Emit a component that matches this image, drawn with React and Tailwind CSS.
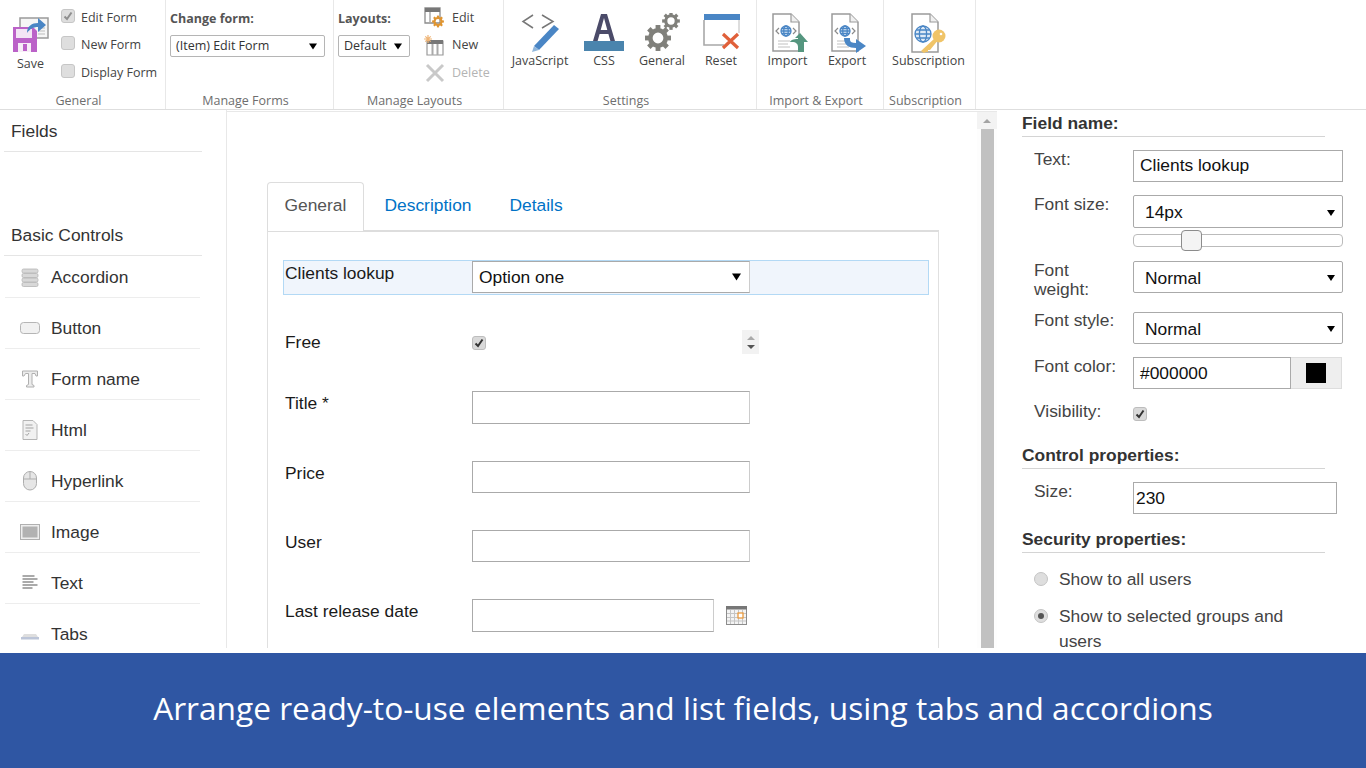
import React from "react";

const Arrow = ({ c = "#000", w = 9, h = 7 }) => (
  <svg width={w} height={h} viewBox="0 0 9 7" className="shrink-0"><path d="M0 0h9L4.5 7z" fill={c} /></svg>
);

const Check = ({ checked, faded }) => (
  <div className={`w-[14px] h-[14px] rounded-[3px] border flex items-center justify-center shrink-0 ${faded ? "bg-[#dedede] border-[#c6c6c6]" : "bg-[#d9d9d9] border-[#bdbdbd]"}`}>
    {checked && (
      <svg width="10" height="10" viewBox="0 0 10 10"><path d="M1.5 5.5 4 8l4.5-6.5" fill="none" stroke={faded ? "#8f8f8f" : "#333"} strokeWidth="2" /></svg>
    )}
  </div>
);

const Gear = ({ cx, cy, r, c = "#80807b" }) => {
  const teeth = [0, 45, 90, 135, 180, 225, 270, 315];
  return (
    <g>
      {teeth.map((a) => (
        <rect key={a} x={cx - r * 0.22} y={cy - r * 1.18} width={r * 0.44} height={r * 0.5} fill={c} transform={`rotate(${a} ${cx} ${cy})`} />
      ))}
      <circle cx={cx} cy={cy} r={r * 0.7} fill="none" stroke={c} strokeWidth={r * 0.42} />
    </g>
  );
};

const SaveIcon = () => (
  <svg width="40" height="40" viewBox="0 0 40 40" className="ml-[11px]">
    <path d="M9 4h28v20H9z" fill="#f6f6f6" stroke="#9b9b9b" strokeWidth="1.500" />
    <path d="M27 14h7M27 17h7M27 20h7" stroke="#bbb" />
    <path d="M2 13h20l4 4v21H2z" fill="#bb62c8" />
    <path d="M5 15h16v9H5z" fill="#f3e4f5" />
    <path d="M7 29h13v9H7z" fill="#f6eef7" />
    <path d="M12 30h4v7h-4z" fill="#bb62c8" />
    <path d="M16 19c0-7 5-10 11-10V4l8 7-8 7v-5c-5 0-8 2-11 6z" fill="#4a86c5" />
  </svg>
);

const JsIcon = () => (
  <svg width="40" height="40" viewBox="0 0 40 40">
    <path d="M13 2 3 8.500l10 6.500M22 2l11 6.500-11 6.500" fill="none" stroke="#777" strokeWidth="1.500" />
    <path d="M34 12l5 4-20 21-5-4z" fill="#4a86c5" />
    <path d="M14 33l5 4-7 2z" fill="#8fb6dc" />
  </svg>
);

const CssIcon = () => (
  <svg width="40" height="40" viewBox="0 0 40 40">
    <path d="M9 28 17 1h6l8 27h-4.600l-2-7h-8.800l-2 7zM16.700 17h6.600L20 5z" fill="#4b4b69" fillRule="evenodd" />
    <rect x="0" y="28" width="40" height="10" fill="#4a84ad" />
  </svg>
);

const GearsIcon = () => (
  <svg width="40" height="40" viewBox="0 0 40 40">
    <Gear cx={16} cy={25} r={11} />
    <Gear cx={29} cy={8} r={7.500} />
  </svg>
);

const ResetIcon = () => (
  <svg width="42" height="40" viewBox="0 0 42 40" className="ml-[2px]">
    <path d="M3 7v25h20" fill="none" stroke="#a8a8a8" strokeWidth="1.600" />
    <path d="M38 7v13" fill="none" stroke="#cfcfcf" strokeWidth="1.400" />
    <rect x="3" y="1" width="36" height="6" fill="#4a86c5" />
    <path d="M22 21l15 14M37 21 22 35" stroke="#e0603a" strokeWidth="3.200" />
  </svg>
);

const DocBase = () => (
  <g>
    <path d="M6 1h18l8 8v29H6z" fill="#fff" stroke="#9a9a9a" strokeWidth="1.500" />
    <path d="M24 1v8h8" fill="#f0f0f0" stroke="#9a9a9a" strokeWidth="1.200" />
    <path d="M11 28h12M11 31h10M11 34h12" stroke="#c0c0c0" />
  </g>
);

const Globe = ({ cx, cy, r }) => (
  <g fill="none" stroke="#4a86c5" strokeWidth="1.300">
    <circle cx={cx} cy={cy} r={r} fill="#dfeaf6" />
    <ellipse cx={cx} cy={cy} rx={r * 0.45} ry={r} />
    <path d={`M${cx - r} ${cy}h${2 * r}M${cx - r * 0.85} ${cy - r * 0.5}h${1.7 * r}M${cx - r * 0.85} ${cy + r * 0.5}h${1.7 * r}`} />
  </g>
);

const ImportIcon = () => (
  <svg width="42" height="40" viewBox="0 0 42 40">
    <DocBase />
    <Globe cx={19} cy={18} r={5} />
    <path d="M12 15l-3 3 3 3M26 15l3 3-3 3" fill="none" stroke="#8a8a8a" strokeWidth="1.200" />
    <path d="M33 20l8 9h-4v10h-6v-5c0-3-2-5-6-5h-2c1-2 3-3 8-3v-1h-3z" fill="#55967f" />
  </svg>
);

const ExportIcon = () => (
  <svg width="42" height="40" viewBox="0 0 42 40">
    <DocBase />
    <Globe cx={19} cy={18} r={5} />
    <path d="M12 15l-3 3 3 3M26 15l3 3-3 3" fill="none" stroke="#8a8a8a" strokeWidth="1.200" />
    <path d="M18 25h6v2c0 2 2 3 6 3v-4l10 7-10 7v-5c-7 0-12-3-12-10z" fill="#4a86c5" />
  </svg>
);

const SubIcon = () => (
  <svg width="40" height="40" viewBox="0 0 40 40">
    <path d="M3 1h18l8 8v30H3z" fill="#fff" stroke="#9a9a9a" strokeWidth="1.500" />
    <path d="M21 1v8h8" fill="#f0f0f0" stroke="#9a9a9a" strokeWidth="1.200" />
    <Globe cx={14} cy={21} r={8} />
    <circle cx={30} cy={23} r={6.500} fill="#f0c468" />
    <path d="M26 25 12 38l3 2 2-1 2 0 0-2 2 0 9-11z" fill="#f0c468" />
    <circle cx={32} cy={21} r={1.300} fill="#fff" />
  </svg>
);

const LayoutEdit = () => (
  <svg width="22" height="22" viewBox="0 0 22 22">
    <path d="M1 1h15v15H1z" fill="#fff" stroke="#8c8c8c" strokeWidth="1.300" />
    <path d="M1 1h15v4H1z" fill="#777" />
    <path d="M6 5v11" stroke="#aaa" strokeWidth="1.500" />
    <Gear cx={14} cy={14.500} r={5} c="#df9430" />
  </svg>
);

const LayoutNew = () => (
  <svg width="22" height="22" viewBox="0 0 22 22">
    <path d="M3 6h16v14H3z" fill="#fff" stroke="#9a9a9a" strokeWidth="1.200" />
    <path d="M3 5h16v4H3z" fill="#777" />
    <path d="M8.500 9v11M13.500 9v11" stroke="#aaa" strokeWidth="2" />
    <path d="M4 0v8M0 4h8M1.300 1.300l5.400 5.400M6.700 1.300 1.300 6.700" stroke="#efb577" strokeWidth="1.200" />
  </svg>
);

const LayoutDel = () => (
  <svg width="22" height="22" viewBox="0 0 22 22"><path d="M3 3l16 16M19 3 3 19" stroke="#c9c9c9" strokeWidth="3" /></svg>
);

const side = {
  Accordion: (
    <svg width="20" height="20" viewBox="0 0 20 20">
      {[2, 6.500, 11, 15.500].map((y) => <rect key={y} x="2" y={y} width="16" height="4" rx="1.500" fill="#d8d8d8" stroke="#b5b5b5" strokeWidth=".8" />)}
    </svg>
  ),
  Button: (
    <svg width="20" height="20" viewBox="0 0 20 20"><rect x=".5" y="4.500" width="19" height="11" rx="3" fill="#f1f1f1" stroke="#b5b5b5" /></svg>
  ),
  "Form name": (
    <svg width="20" height="20" viewBox="0 0 20 20"><path d="M2.500 2h15v5h-1.500l-1-2.500h-3v11l2 1V18h-7.500v-1.500l2-1v-11h-3L4 7H2.500z" fill="#ececec" stroke="#b0b0b0" /></svg>
  ),
  Html: (
    <svg width="20" height="20" viewBox="0 0 20 20">
      <path d="M3 .5h10l4 4v15H3z" fill="#f1f1f1" stroke="#b5b5b5" />
      <path d="M5.500 5h7M5.500 8h8M5.500 11h5" stroke="#a3a3a3" />
      <path d="M5.500 14l1.500 1.500 2-2.500" fill="none" stroke="#a3a3a3" />
    </svg>
  ),
  Hyperlink: (
    <svg width="20" height="20" viewBox="0 0 20 20">
      <rect x="3.500" y=".5" width="13" height="18.500" rx="6.500" fill="#e6e6e6" stroke="#adadad" />
      <path d="M3.500 8h13M10 .5V8" stroke="#adadad" />
    </svg>
  ),
  Image: (
    <svg width="20" height="20" viewBox="0 0 20 20"><rect x=".5" y="2.500" width="19" height="15" fill="#eee" stroke="#b0b0b0" /><rect x="2.500" y="4.500" width="15" height="11" fill="#b2b2b2" /></svg>
  ),
  Text: (
    <svg width="20" height="20" viewBox="0 0 20 20"><path d="M2.500 3h12M2.500 6h15M2.500 9h11M2.500 12h15M2.500 15h10" stroke="#8f8f8f" strokeWidth="1.300" /></svg>
  ),
  Tabs: (
    <svg width="20" height="20" viewBox="0 0 20 20"><path d="M4 10h12l2 3H2z" fill="#dedede" /><rect x="1" y="13" width="18" height="2.500" fill="#bcc5d8" /></svg>
  ),
};

const RibbonBtn = ({ w, icon, label }) => (
  <div className={`flex flex-col items-center ${w}`}>
    <div className="h-[40px] mt-[13px]">{icon}</div>
    <span className="leading-[16px]">{label}</span>
  </div>
);

const Group = ({ w, label, children }) => (
  <div className={`${w} h-[109px] flex flex-col border-r border-[#e8e8e8] shrink-0`}>
    <div className="h-[93px] flex">{children}</div>
    <div className="mt-[1px] text-center text-[#6e6e6e] leading-[16px] whitespace-nowrap pr-[8px]">{label}</div>
  </div>
);

const RSel = ({ w, text }) => (
  <div className={`${w} h-[22px] border border-[#b5b5b5] rounded-[2px] flex items-center justify-between pl-[5px] pr-[7px] text-[#333] bg-white`}>
    <span>{text}</span>
    <Arrow w={8} h={7} />
  </div>
);

const Ribbon = () => (
  <div className="flex h-[110px] border-b border-[#dedede] text-[12.500px] text-[#444] font-['Open_Sans',sans-serif]">
    <Group w="w-[166px]" label="General">
      <div className="w-[61px] flex flex-col">
        <div className="mt-[14px]"><SaveIcon /></div>
        <span className="text-center mt-[2px] leading-[16px]">Save</span>
      </div>
      <div className="flex flex-col pt-[9px]">
        {[["Edit Form", true, "mb-[9px]"], ["New Form", false, "mb-[10px]"], ["Display Form", false, ""]].map(([t, c, m]) => (
          <div key={t} className={`flex items-center gap-[6px] h-[18px] whitespace-nowrap ${m}`}>
            <div className="mb-[4px]"><Check checked={c} faded /></div>
            <span>{t}</span>
          </div>
        ))}
      </div>
    </Group>
    <Group w="w-[168px]" label="Manage Forms">
      <div className="pl-[4px] pt-[10px]">
        <div className="font-bold text-[#555] leading-[18px] mb-[7px]">Change form:</div>
        <RSel w="w-[155px]" text="(Item) Edit Form" />
      </div>
    </Group>
    <Group w="w-[170px]" label="Manage Layouts">
      <div className="pl-[4px] pt-[10px] w-[90px]">
        <div className="font-bold text-[#555] leading-[18px] mb-[7px]">Layouts:</div>
        <RSel w="w-[72px]" text="Default" />
      </div>
      <div className="flex flex-col pt-[7px]">
        {[[<LayoutEdit key="e" />, "Edit", ""], [<LayoutNew key="n" />, "New", ""], [<LayoutDel key="d" />, "Delete", "text-[#b4b4b4]"]].map(([ic, t, cl]) => (
          <div key={t} className={`flex items-center gap-[6px] h-[22px] mb-[5.500px] ${cl}`}>
            {ic}
            <span>{t}</span>
          </div>
        ))}
      </div>
    </Group>
    <Group w="w-[253px]" label="Settings">
      <div className="w-px" />
      <RibbonBtn w="w-[70px]" icon={<JsIcon />} label="JavaScript" />
      <RibbonBtn w="w-[58px]" icon={<CssIcon />} label="CSS" />
      <RibbonBtn w="w-[58px]" icon={<GearsIcon />} label="General" />
      <RibbonBtn w="w-[60px]" icon={<ResetIcon />} label="Reset" />
    </Group>
    <Group w="w-[127px]" label="Import & Export">
      <RibbonBtn w="w-[61px]" icon={<ImportIcon />} label="Import" />
      <RibbonBtn w="w-[58px]" icon={<ExportIcon />} label="Export" />
    </Group>
    <Group w="w-[92px]" label="Subscription">
      <RibbonBtn w="w-[89px]" icon={<SubIcon />} label="Subscription" />
    </Group>
  </div>
);

const Sidebar = () => {
  const items = ["Accordion", "Button", "Form name", "Html", "Hyperlink", "Image", "Text", "Tabs"];
  return (
    <div className="w-[227px] h-[538px] overflow-hidden shrink-0 border-r border-[#e8e8e8] text-[#333] leading-6">
      <div className="ml-[4px] w-[198px] mt-[9px] pl-[7px] pb-[8px] border-b border-[#e5e5e5]">Fields</div>
      <div className="ml-[4px] w-[198px] mt-[71px] pl-[7px] pb-[8px] border-b border-[#e5e5e5]">Basic Controls</div>
      <ul className="ml-[5px] w-[195px]">
        {items.map((t, i) => (
          <li key={t} className={`flex items-start gap-[11px] pl-[15px] border-b border-[#ededed] ${i === 0 ? "h-[42px] pt-[9px]" : "h-[51px] pt-[18px]"}`}>
            <span className="w-[20px] h-[24px] flex items-center justify-center">{side[t]}</span>
            <span>{t}</span>
          </li>
        ))}
      </ul>
    </div>
  );
};

const Input = ({ w = "w-[278px]", h = "h-[33px]" }) => (
  <div className={`${w} ${h} border border-[#aaa] border-r-[#ccc] bg-white shrink-0`} />
);

const Row = ({ label, children, active, mt = "mt-[37px]", h = "h-[33px]" }) => (
  <div className={`${mt} ${h} flex items-start pl-[1px] border ${active ? "bg-[#f0f5fc] border-[#b3d9f5]" : "border-transparent border-y-0"}`}>
    <div className="w-[187px] shrink-0 text-[#1a1a1a]">{label}</div>
    {children}
  </div>
);

const Center = () => (
  <div className="flex-1 min-w-0 h-[537px] overflow-hidden flex mt-px border-t border-[#e8e8e8]">
    <div className="flex-1 min-w-0 pl-[40px] pt-[70px] leading-6">
      <div className="w-[672px]">
        <div className="flex h-[49px] relative z-10">
          <div className="w-[97px] h-[49px] border border-[#ddd] border-b-0 rounded-t-[4px] bg-white text-[#555] pl-[16.500px] pt-[10px]">General</div>
          <div className="ml-[4px] pl-[16.500px] pr-[17px] pt-[11px] text-[#0072c6]">Description</div>
          <div className="ml-[4px] px-[17px] pt-[11px] text-[#0072c6]">Details</div>
        </div>
        <div className="-mt-[1px] h-[460px] border border-[#e0e0e0] border-t-2 border-t-[#ddd] pl-[15px] pr-[9px] pt-[28px]">
          <Row label="Clients lookup" active mt="mt-0" h="h-[35px]">
            <div className="w-[278px] h-[32px] border border-[#aaa] border-r-[#ccc] bg-white flex items-center justify-between pl-[6px] pr-[8px] text-[#111]">
              <span>Option one</span>
              <Arrow w={9} h={8} />
            </div>
          </Row>
          <Row label="Free" mt="mt-[35px]" h="h-[24px]">
            <div className="w-[270px] pt-[6px]"><Check checked /></div>
            <div className="w-[17px] h-[24px] bg-[#f2f2f2] flex flex-col items-center justify-center gap-[5px]">
              <svg width="8" height="4" viewBox="0 0 8 4"><path d="M0 4h8L4 0z" fill="#aaa" /></svg>
              <svg width="8" height="4" viewBox="0 0 8 4"><path d="M0 0h8L4 4z" fill="#555" /></svg>
            </div>
          </Row>
          <Row label="Title *"><Input /></Row>
          <Row label="Price" h="h-[32px]"><Input h="h-[32px]" /></Row>
          <Row label="User" h="h-[32px]"><Input h="h-[32px]" /></Row>
          <Row label="Last release date">
            <Input w="w-[242px]" />
            <svg width="21" height="20" viewBox="0 0 21 20" className="ml-[12px] mt-[7px]">
              <rect x=".5" y=".5" width="20" height="18" fill="#f4f4f4" stroke="#8c8c8c" />
              <rect x="0" y="0" width="21" height="3.500" fill="#777" />
              <path d="M4.500 4v14M8.500 4v14M12.500 4v14M16.500 4v14M1 7.500h19M1 11.500h19M1 15h19" stroke="#c5c5c5" />
              <rect x="12" y="7" width="5" height="5" fill="#fff" stroke="#ea9a3e" strokeWidth="1.300" />
            </svg>
          </Row>
        </div>
      </div>
    </div>
    <div className="w-[20px] shrink-0 flex flex-col items-center bg-[#fdfdfd]">
      <div className="h-[17px] w-full bg-[#f3f3f3] flex items-center justify-center">
        <svg width="8" height="4" viewBox="0 0 8 4"><path d="M0 4h8L4 0z" fill="#a3a3a3" /></svg>
      </div>
      <div className="w-[13px] flex-1 bg-[#c1c1c1]" />
    </div>
  </div>
);

const Head = ({ children, mt }) => (
  <div className={`${mt} w-[303px] h-[26px] border-b border-[#d4d4d4] font-bold text-[#333] leading-6`}>{children}</div>
);

const PRow = ({ label, mt = "mt-[13px]", children, lab = "" }) => (
  <div className={`${mt} flex items-start`}>
    <div className={`w-[111px] pl-[12px] shrink-0 leading-[19px] text-[#444] ${lab}`}>{label}</div>
    {children}
  </div>
);

const PSel = ({ text, h = "h-[32px]" }) => (
  <div className={`w-[210px] ${h} border border-[#aaa] rounded-[2px] bg-white flex items-center justify-between pl-[11px] pr-[7px] pt-[2px] text-[#111]`}>
    <span>{text}</span>
    <Arrow w={8} h={8} />
  </div>
);

const Radio = ({ on, mt, children }) => (
  <div className={`${mt} flex items-start pl-[12px] leading-[25px] text-[#444] w-[290px]`}>
    <div className="w-[14px] h-[14px] mt-[5px] rounded-full bg-[#dedede] border border-[#c4c4c4] shrink-0 flex items-center justify-center">
      {on && <div className="w-[6px] h-[6px] rounded-full bg-[#555]" />}
    </div>
    <span className="ml-[11px]">{children}</span>
  </div>
);

const RightPanel = () => (
  <div className="flex-1 min-w-0 pl-[25px] pt-px">
    <Head>Field name:</Head>
    <PRow label="Text:">
      <div className="w-[210px] h-[32px] border border-[#aaa] bg-white flex items-center pl-[6px] pb-[2px] text-[#111]">Clients lookup</div>
    </PRow>
    <PRow label="Font size:">
      <div>
        <PSel text="14px" h="h-[33px]" />
        <div className="relative mt-[6px] w-[210px] h-[13px] rounded-[4px] border border-[#bbb] bg-white">
          <div className="absolute left-[47px] top-[-5px] w-[21px] h-[21px] rounded-[4px] border border-[#8c8c8c] bg-[#f4f4f4]" />
        </div>
      </div>
    </PRow>
    <PRow label={<>Font<br />weight:</>} mt="mt-[14px]"><PSel text="Normal" /></PRow>
    <PRow label="Font style:" mt="mt-[13px]" lab="-mt-px"><PSel text="Normal" /></PRow>
    <PRow label="Font color:">
      <div className="flex h-[32px]">
        <div className="w-[158px] border border-[#aaa] bg-white flex items-center pl-[6px] text-[#111]">#000000</div>
        <div className="w-[51px] bg-[#eeeeee] border border-[#ddd] border-l-0 flex items-center justify-center"><div className="w-[20px] h-[20px] bg-black" /></div>
      </div>
    </PRow>
    <PRow label="Visibility:"><div className="mt-[5px]"><Check checked /></div></PRow>
    <Head mt="mt-[22px]">Control properties:</Head>
    <PRow label="Size:">
      <div className="w-[204px] h-[32px] border border-[#aaa] bg-white flex items-center pl-[2px] text-[#111]">230</div>
    </PRow>
    <Head mt="mt-[13px]">Security properties:</Head>
    <Radio mt="mt-[14px]">Show to all users</Radio>
    <Radio on mt="mt-[12px]">Show to selected groups and users</Radio>
  </div>
);

export default function App() {
  return (
    <div className="w-[1366px] h-[768px] overflow-hidden flex flex-col bg-white font-['Liberation_Sans',sans-serif] text-[17.400px]">
      <Ribbon />
      <div className="h-[543px] flex items-start">
        <Sidebar />
        <div className="w-[770px] shrink-0 flex"><Center /></div>
        <RightPanel />
      </div>
      <div className="h-[115px] bg-[#2f56a3] flex items-center justify-center text-white font-['Open_Sans',sans-serif] text-[31.650px] pb-[5px]">
        Arrange ready-to-use elements and list fields, using tabs and accordions
      </div>
    </div>
  );
}
